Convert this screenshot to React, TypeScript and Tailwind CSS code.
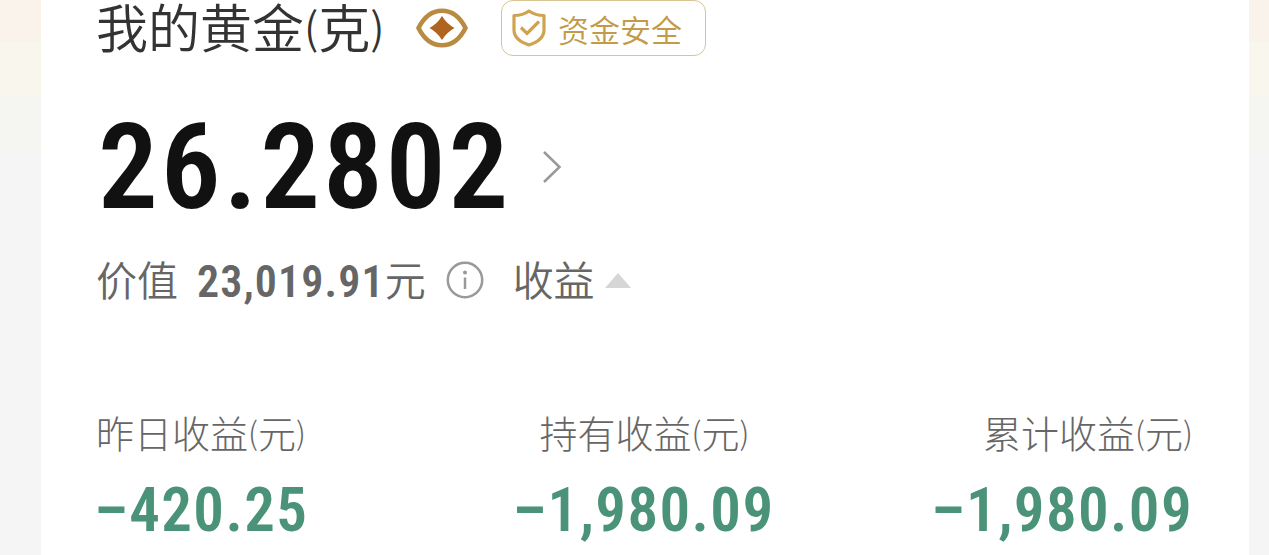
interface Stat {
  label: string;
  value: string;
  align: string;
}

const stats: Stat[] = [
  { label: "昨日收益", value: "–420.25", align: "items-start" },
  { label: "持有收益", value: "–1,980.09", align: "items-center" },
  { label: "累计收益", value: "–1,980.09", align: "items-end" },
];

// label followed by its unit, the brackets are slightly smaller than the text
function UnitLabel({ text, unit }: { text: string; unit: string }) {
  return (
    <>
      {text}
      <span className="align-[0.09em] text-[0.83em] leading-none">(</span>
      {unit}
      <span className="align-[0.09em] text-[0.83em] leading-none">)</span>
    </>
  );
}

function EyeIcon() {
  return (
    <svg viewBox="0 0 52 40" className="h-10 w-[52px]" fill="none">
      <path
        d="M2.5 20C8 9 16 2.7 26 2.7S44 9 49.5 20C44 31 36 37.3 26 37.3S8 31 2.5 20Z"
        stroke="#b98a41"
        strokeWidth="4.6"
        strokeLinejoin="round"
      />
      <path d="M26 8Q30.5 15.5 38.5 20Q30.5 24.5 26 32Q21.5 24.5 13.5 20Q21.5 15.5 26 8Z" fill="#b0641f" />
    </svg>
  );
}

function ShieldIcon() {
  return (
    <svg viewBox="0 0 34 38" className="h-[38px] w-[34px]" fill="none" stroke="#d0a350" strokeWidth="3.2">
      <path d="M17 2C13 5 8 6.5 2 6.5V21C2 28.5 8 33 17 36C26 33 32 28.5 32 21V6.5C26 6.5 21 5 17 2Z" strokeLinejoin="round" />
      <path d="M9 18.5L15 24.5L27 12.5" />
    </svg>
  );
}

export default function App() {
  return (
    <main className="h-[555px] w-full overflow-hidden bg-[linear-gradient(#f9f3eb_0px,#f9f3eb_42px,#f9f6ee_42px,#f9f6ee_95px,#f5f5f1_95px,#f5f5f1_150px,#f5f5f6_150px)] pr-5 pl-[41px] font-['Roboto','Noto_Sans_CJK_SC',sans-serif] whitespace-nowrap">
      <section className="h-full bg-white pr-14 pl-[55px]">
        <header className="flex h-14 items-center">
          <h1 className="w-[290px] pb-1 font-['Noto_Sans_CJK_SC',sans-serif] text-[52px] leading-[50px] font-[350] text-[#333]">
            <UnitLabel text="我的黄金" unit="克" />
          </h1>
          <div className="ml-[30px] pb-px">
            <EyeIcon />
          </div>
          <div className="ml-[33px] flex h-14 w-[205px] items-center rounded-xl border border-[#d8c494] pl-2.5">
            <ShieldIcon />
            <span className="mt-1.5 ml-3 text-[31px] leading-none font-[350] text-[#c39b48]">资金安全</span>
          </div>
        </header>

        <div className="mt-[47px] flex h-32 items-center pl-0.5">
          <span className="text-[119px] leading-none font-semibold tracking-[2.9px] text-[#111] font-stretch-[87%]">26.2802</span>
          <svg viewBox="0 0 20 34" className="ml-[31px] h-[34px] w-5" fill="none" stroke="#999" strokeWidth="2.5">
            <path d="M2 2L17.5 17L2 32" />
          </svg>
        </div>

        <div className="mt-[17px] flex h-16 items-center text-[41px] leading-none text-[#666]">
          <span className="pt-1 font-[350]">价值</span>
          <span className="ml-[19px] pt-1 text-[44px] font-semibold tracking-[1.1px] font-stretch-[87%]">23,019.91</span>
          <span className="pt-1 font-[350]">元</span>
          <svg viewBox="0 0 38 38" className="ml-5 h-[38px] w-[38px]" fill="none" stroke="#999" strokeWidth="2.5">
            <circle cx="19" cy="19" r="17.2" />
            <path d="M19 16.5V28" />
            <circle cx="19" cy="11.5" r="2" fill="#999" stroke="none" />
          </svg>
          <span className="ml-[29px] pt-1 font-[350]">收益</span>
          <svg viewBox="0 0 26 15" className="ml-2.5 h-[15px] w-[26px]" fill="#d6d6d6">
            <path d="M13 0L26 15H0Z" />
          </svg>
        </div>

        <div className="mt-[90px] grid grid-cols-3">
          {stats.map((stat) => (
            <div key={stat.label} className={`flex flex-col ${stat.align}`}>
              <span className="font-['Noto_Sans_CJK_SC',sans-serif] text-[38px] leading-[60px] font-light text-[#666]">
                <UnitLabel text={stat.label} unit="元" />
              </span>
              <span className="mt-3 -ml-0.5 text-[61px] leading-[72px] font-semibold tracking-[1.4px] text-[#4a9278] font-stretch-[87%]">
                {stat.value}
              </span>
            </div>
          ))}
        </div>
      </section>
    </main>
  );
}
